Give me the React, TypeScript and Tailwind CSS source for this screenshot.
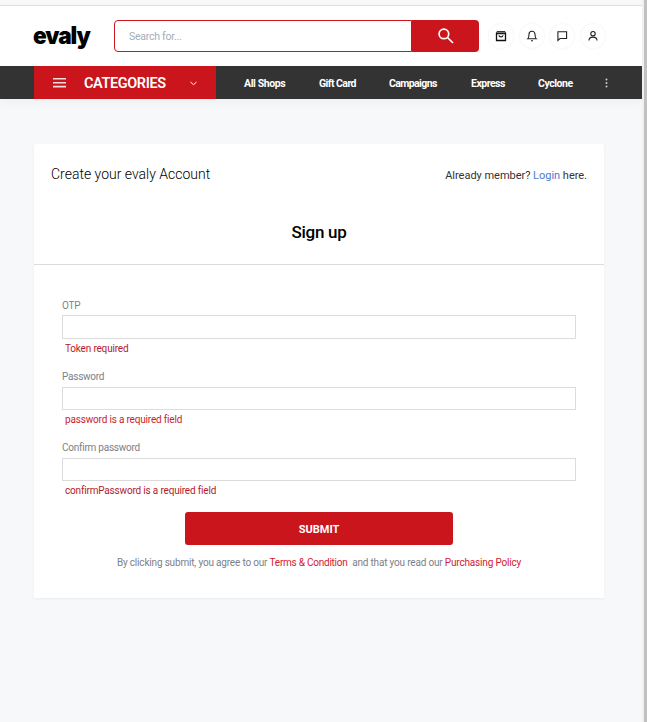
import React from "react";

const links = [
  { label: "All Shops", cls: "w-[41px] ml-[28px] tracking-[-0.38px]" },
  { label: "Gift Card", cls: "w-[37px] ml-[34px] tracking-[-0.56px]" },
  { label: "Campaigns", cls: "w-[48px] ml-[33px] tracking-[-0.6px]" },
  { label: "Express", cls: "w-[34px] ml-[34px] tracking-[-0.5px]" },
  { label: "Cyclone", cls: "w-[35px] ml-[33px] tracking-[-0.44px]" },
];

const fields = [
  { label: "OTP", error: "Token required", box: "h-6", gap: "h-[71px]", labelBox: "h-[17px]", tone: "text-[#b3202c]" },
  { label: "Password", error: "password is a required field", box: "h-[23px]", gap: "h-[71px]", labelBox: "h-[18px]", tone: "text-[#c8242c]" },
  { label: "Confirm password", error: "confirmPassword is a required field", box: "h-[23px]", gap: "h-[72px]", labelBox: "h-[18px]", tone: "text-[#b3202c]" },
];

function Round({ children }: { children: React.ReactNode }) {
  return (
    <button className="flex size-6 items-center justify-center rounded-full bg-white shadow-[0_0_3px_rgba(0,0,0,0.07)]">
      <svg width="12" height="12" viewBox="0 0 12 12" fill="none" stroke="#222" strokeWidth="1.1">
        {children}
      </svg>
    </button>
  );
}

function Header() {
  return (
    <header className="flex h-[61px] items-start border-t border-[#dcdee1] bg-white">
      <div className="ml-[33px] mt-[15px] w-[81px] whitespace-nowrap font-[Inter,sans-serif] text-[24px] font-black leading-[30px] tracking-[-1.1px] text-black">
        <span className="inline-block origin-left scale-x-[0.94]">evaly</span>
      </div>
      <div className="mt-[14px] flex h-8 w-[365px]">
        <div className="flex w-[298px] items-center rounded-l-[4px] border border-[#c9151b] pl-[14px] pt-[2px] text-[10.5px] tracking-[-0.25px] text-[#a4adba]">
          Search for...
        </div>
        <button className="flex flex-1 items-center justify-center rounded-r-[4px] bg-[#c9151b]">
          <svg width="16" height="16" viewBox="0 0 16 16" fill="none" stroke="white" strokeWidth="1.7" className="-mt-px">
            <circle cx="5.9" cy="5.9" r="4.8" />
            <path d="M9.5 9.5 15 15" />
          </svg>
        </button>
      </div>
      <div className="ml-[10px] mt-[18px] flex gap-[6.5px]">
        <Round>
          <path d="M1.5 3.5h9v7h-9z" strokeWidth="1.3" stroke="#111" />
          <path d="M1.5 3.3 2.4 1.5h7.2l.9 1.8M4 5.2c0 2.2 4 2.2 4 0" />
          <path d="M2.2 2.4h7.6" strokeWidth="1.4" stroke="#777" />
        </Round>
        <Round>
          <path d="M1.8 8.8h8.4C9 7.8 9 6.5 9 4.3a3 3 0 0 0-6 0c0 2.2 0 3.5-1.2 4.5zM5 10.7h2" />
        </Round>
        <Round>
          <path d="M1.9 10.4V1.8h8.7v6.7H4z" />
        </Round>
        <Round>
          <circle cx="6" cy="3.7" r="2.2" />
          <path d="M2 10.4c0-4.4 8-4.4 8 0" />
        </Round>
      </div>
    </header>
  );
}

function Nav() {
  return (
    <nav className="flex h-[33px] items-center bg-[#333] pl-[34px] text-white shadow-[0_4px_8px_rgba(43,52,69,0.04)]">
      <button className="flex h-full w-[182px] items-center bg-[#c9151b]">
        <svg width="13" height="10" viewBox="0 0 13 10" className="ml-[19px]" fill="#f7dcdd">
          <path d="M0 0h13v1.6H0zM0 3.9h13v1.6H0zM0 7.8h13v1.6H0z" />
        </svg>
        <span className="ml-[18px] mt-0.5 w-[82px] whitespace-nowrap text-left text-[14.5px] font-semibold tracking-[-0.4px]">CATEGORIES</span>
        <svg width="7" height="5" viewBox="0 0 7 5" fill="none" stroke="#fff" className="ml-[24px] mt-[2px]">
          <path d="m.5 1 3 2.7 3-2.7" />
        </svg>
      </button>
      {links.map((l) => (
        <span key={l.label} className={`mt-0.5 whitespace-nowrap text-[10.5px] font-bold ${l.cls}`}>{l.label}</span>
      ))}
      <svg width="3" height="10" viewBox="0 0 3 10" fill="#ccc" className="ml-[32px]">
        <circle cx="1.5" cy="1.4" r="1" />
        <circle cx="1.5" cy="5" r="1" />
        <circle cx="1.5" cy="8.6" r="1" />
      </svg>
    </nav>
  );
}

export default function App() {
  return (
    <div className="flex h-[722px] w-[647px] overflow-hidden bg-[#f6f8fa] font-[Roboto,sans-serif]">
      <div className="w-[642px] pt-[5px]">
        <Header />
        <Nav />
        <main className="ml-[34px] mt-[45px] h-[454px] w-[570px] rounded-t-[3px] bg-white shadow-[0_1px_3px_rgba(3,0,71,0.05)]">
          <div className="h-[121px] border-b border-[#dcdcdc]">
            <div className="flex h-[43px] items-start justify-between px-[17px] pt-[20px] leading-5">
              <h1 className="whitespace-nowrap text-[14px] font-light text-black">Create your evaly Account</h1>
              <p className="mt-[2px] whitespace-nowrap text-[11px] tracking-[-0.02px] text-[#333]">
                Already member? <a className="text-[#4d79cf]">Login</a> here.
              </p>
            </div>
            <h2 className="mt-[33px] text-center text-[17px] font-medium leading-6 tracking-[-0.25px] text-black">Sign up</h2>
          </div>
          <form className="px-[28px] pt-[33px]">
            {fields.map((f) => (
              <div key={f.label} className={f.gap}>
                <label className={`block text-[10px] leading-[16px] tracking-[-0.24px] text-[#7d8087] ${f.labelBox}`}>{f.label}</label>
                <div className={`border border-[#dcdcdc] bg-white ${f.box}`} />
                <p className={`pl-[3px] pt-[2px] text-[10px] leading-4 tracking-[-0.18px] ${f.tone}`}>{f.error}</p>
              </div>
            ))}
            <button type="button" className="mx-auto flex h-[33px] w-[268px] items-center justify-center rounded-[3px] bg-[#c9151b] pt-[3px] text-[11px] font-bold text-white">SUBMIT</button>
            <p className="mt-[10px] whitespace-pre text-center text-[10px] leading-4 tracking-[-0.18px] text-[#7d8087]">
              By clicking submit, you agree to our <a className="tracking-[-0.24px] text-[#d3202f]">Terms &amp; Condition</a>{"  "}and that you read our <a className="text-[#d3202f]">Purchasing Policy</a>
            </p>
          </form>
        </main>
      </div>
      <div className="w-[2px] bg-[#f0f0f0]" />
      <div className="w-[3px] bg-[#c1c1c1]" />
    </div>
  );
}
